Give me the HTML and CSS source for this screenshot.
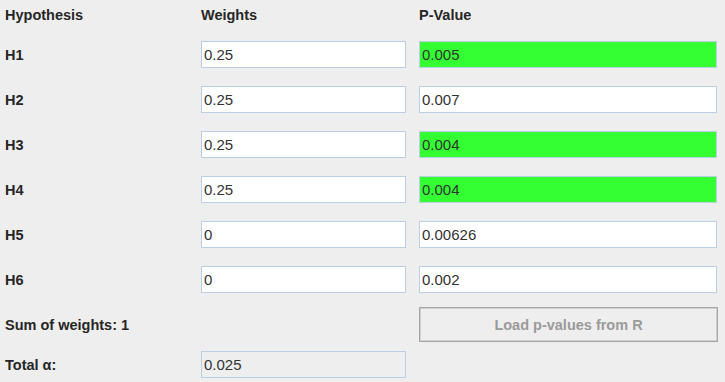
FILE: index.html
```html
<!DOCTYPE html>
<html lang="en">
<head>
    <meta charset="UTF-8">
    <meta name="viewport" content="width=device-width, initial-scale=1.0">
    <title>Weights and P-Values</title>
    <link rel="stylesheet" href="styles.css">
</head>
<body>
    <div class="panel">
        <!-- Column headers -->
        <div class="grid header">
            <div class="label">Hypothesis</div>
            <div class="label">Weights</div>
            <div class="label">P-Value</div>
        </div>

        <!-- Hypotheses -->
        <div class="grid rows">
            <div class="label">H1</div>
            <input class="field" type="text" value="0.25">
            <input class="field significant" type="text" value="0.005">

            <div class="label">H2</div>
            <input class="field" type="text" value="0.25">
            <input class="field" type="text" value="0.007">

            <div class="label">H3</div>
            <input class="field" type="text" value="0.25">
            <input class="field significant" type="text" value="0.004">

            <div class="label">H4</div>
            <input class="field" type="text" value="0.25">
            <input class="field significant" type="text" value="0.004">

            <div class="label">H5</div>
            <input class="field" type="text" value="0">
            <input class="field" type="text" value="0.00626">

            <div class="label">H6</div>
            <input class="field" type="text" value="0">
            <input class="field" type="text" value="0.002">
        </div>

        <!-- Summary -->
        <div class="grid summary">
            <div class="label">Sum of weights: 1</div>
            <div></div>
            <button class="load-button" disabled>Load p-values from R</button>
        </div>

        <div class="grid total">
            <div class="label">Total &alpha;:</div>
            <input class="field readonly" type="text" value="0.025" readonly>
            <div></div>
        </div>
    </div>
</body>
</html>
```

FILE: styles.css
```css
body {
    font-family: "Liberation Sans", Arial, sans-serif;
    margin: 0;
    padding: 0;
    background-color: #eeeeee;
}

.panel {
    padding: 4px 8px 0 5px;
}

.grid {
    display: grid;
    grid-template-columns: 183px 205px 298px;
    column-gap: 13px;
    align-items: center;
}

.label {
    font-size: 14.5px;
    font-weight: bold;
    color: #262626;
    white-space: nowrap;
}

.header {
    height: 22px;
    margin-bottom: 15px;
}

.rows {
    grid-auto-rows: 27px;
    row-gap: 18px;
}

.field {
    box-sizing: border-box;
    width: 100%;
    height: 27px;
    margin: 0;
    padding: 0 2px;
    border: 1px solid #b9cfe6;
    background-color: #fff;
    font-family: "Liberation Sans", Arial, sans-serif;
    font-size: 15px;
    color: #333;
    outline: none;
}

.field.significant {
    background-color: #33ff33;
}

.field.readonly {
    background-color: #eeeeee;
}

.summary {
    margin-top: 14px;
    height: 35px;
}

.load-button {
    box-sizing: border-box;
    width: 299px;
    height: 35px;
    border: 1px solid #a6a6a6;
    box-shadow: inset 0 0 0 1px #cfcfcf;
    background-color: #eeeeee;
    font-family: "Liberation Sans", Arial, sans-serif;
    font-size: 14.5px;
    font-weight: bold;
    color: #9a9a9a;
}

.total {
    margin-top: 9px;
}
```
